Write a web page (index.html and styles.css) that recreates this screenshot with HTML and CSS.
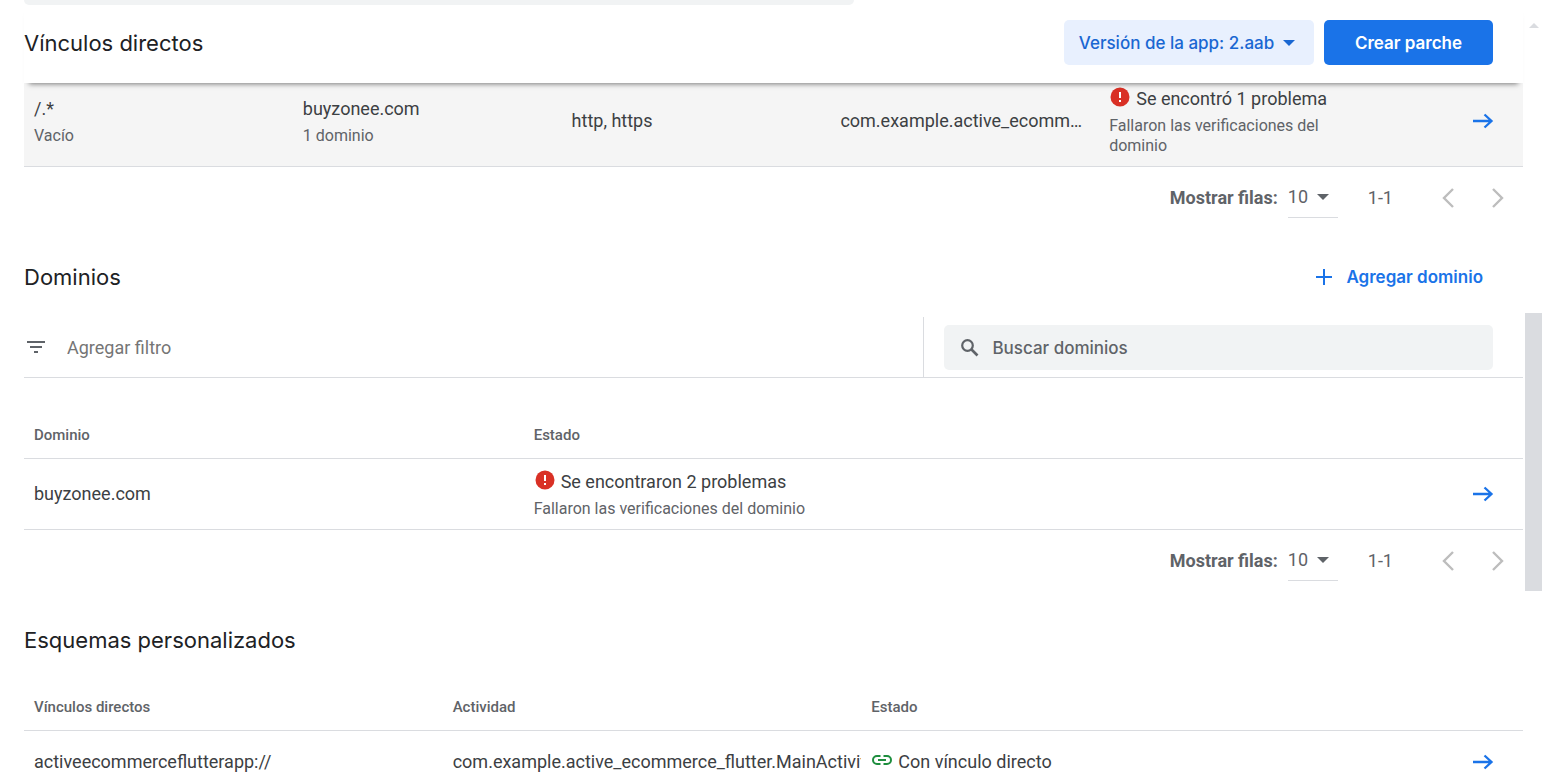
FILE: index.html
```html
<!DOCTYPE html>
<html lang="es">
<head>
<meta charset="utf-8">
<title>Vínculos directos</title>
<link rel="stylesheet" href="styles.css">
</head>
<body>
<svg class="defs" aria-hidden="true">
  <symbol id="arrow" viewBox="0 0 22 18"><path d="M1 9h18M12.500 2.500 19.500 9l-7 6.500" fill="none" stroke="currentColor" stroke-width="2.300"/></symbol>
  <symbol id="error" viewBox="0 0 20 20"><circle cx="10" cy="10" r="9.500" fill="#d93025"/><path d="M9 5h2v6H9zM9 13h2v2H9z" fill="#fff"/></symbol>
  <symbol id="caret" viewBox="0 0 12 6"><path d="M0 0h12L6 6z" fill="currentColor"/></symbol>
  <symbol id="prev" viewBox="0 0 12 20"><path d="M11 1 2 10l9 9" fill="none" stroke="currentColor" stroke-width="2.400"/></symbol>
  <symbol id="next" viewBox="0 0 12 20"><path d="m1 1 9 9-9 9" fill="none" stroke="currentColor" stroke-width="2.400"/></symbol>
</svg>
<div class="app">
  <main class="content">
    <div class="panel-end"></div>
    <header class="topbar">
      <h1 class="title">Vínculos directos</h1>
      <div class="actions">
        <button class="btn btn-tonal" type="button">Versión de la app: 2.aab<svg class="caret"><use href="#caret"/></svg></button>
        <button class="btn btn-primary" type="button">Crear parche</button>
      </div>
    </header>

    <section class="links">
      <table class="table">
        <colgroup><col><col><col><col><col><col class="col-links-go"></colgroup>
        <tbody>
          <tr class="active">
            <td><div class="primary">/.*</div><div class="secondary">Vacío</div></td>
            <td><div class="primary">buyzonee.com</div><div class="secondary">1 dominio</div></td>
            <td><div class="primary single">http, https</div></td>
            <td><div class="primary single ellipsis">com.example.active_ecommerce_flutter.MainActivity</div></td>
            <td><div class="primary status"><svg class="error"><use href="#error"/></svg>Se encontró 1 problema</div><div class="secondary">Fallaron las verificaciones del dominio</div></td>
            <td class="go"><a href="#" aria-label="Ver vínculo"><svg class="arrow"><use href="#arrow"/></svg></a></td>
          </tr>
        </tbody>
      </table>
      <div class="pager">
        <label class="pager-label" for="rows-links">Mostrar filas:</label>
        <span class="pager-select"><select id="rows-links"><option>10</option></select><svg class="caret"><use href="#caret"/></svg></span>
        <span class="pager-range">1-1</span>
        <button class="pager-btn" type="button" aria-label="Anterior"><svg><use href="#prev"/></svg></button>
        <button class="pager-btn" type="button" aria-label="Siguiente"><svg><use href="#next"/></svg></button>
      </div>
    </section>

    <section>
      <div class="section-head">
        <h2 class="title">Dominios</h2>
        <button class="btn btn-text" type="button"><svg class="plus" viewBox="0 0 16 16"><path d="M8 0v16M0 8h16" stroke="currentColor" stroke-width="2"/></svg>Agregar dominio</button>
      </div>
      <div class="toolbar">
        <label class="filter">
          <svg class="filter-icon" viewBox="0 0 18 12"><path d="M0 1h18M3 6h12M7 11h4" stroke="currentColor" stroke-width="2"/></svg>
          <input class="filter-input" type="text" placeholder="Agregar filtro" aria-label="Agregar filtro">
        </label>
        <div class="search-wrap">
          <label class="search">
            <svg class="search-icon" viewBox="0 0 18 18"><circle cx="6.500" cy="6.500" r="5.300" fill="none" stroke="currentColor" stroke-width="2.200"/><path d="m10.500 10.500 6 6" stroke="currentColor" stroke-width="2.600"/></svg>
            <input class="search-input" type="search" placeholder="Buscar dominios" aria-label="Buscar dominios">
          </label>
        </div>
      </div>
      <table class="table">
        <thead><tr><th>Dominio</th><th>Estado</th><th></th></tr></thead>
        <tbody>
          <tr>
            <td><div class="primary single">buyzonee.com</div></td>
            <td><div class="primary status"><svg class="error"><use href="#error"/></svg>Se encontraron 2 problemas</div><div class="secondary">Fallaron las verificaciones del dominio</div></td>
            <td class="go"><a href="#" aria-label="Ver dominio"><svg class="arrow"><use href="#arrow"/></svg></a></td>
          </tr>
        </tbody>
      </table>
      <div class="pager">
        <label class="pager-label" for="rows-domains">Mostrar filas:</label>
        <span class="pager-select"><select id="rows-domains"><option>10</option></select><svg class="caret"><use href="#caret"/></svg></span>
        <span class="pager-range">1-1</span>
        <button class="pager-btn" type="button" aria-label="Anterior"><svg><use href="#prev"/></svg></button>
        <button class="pager-btn" type="button" aria-label="Siguiente"><svg><use href="#next"/></svg></button>
      </div>
    </section>

    <section>
      <div class="section-head">
        <h2 class="title">Esquemas personalizados</h2>
      </div>
      <table class="table schemes">
        <colgroup><col><col><col><col class="col-schemes-go"></colgroup>
        <thead><tr><th>Vínculos directos</th><th>Actividad</th><th>Estado</th><th></th></tr></thead>
        <tbody>
          <tr>
            <td><div class="primary single">activeecommerceflutterapp://</div></td>
            <td class="flush"><div class="primary single clip">com.example.active_ecommerce_flutter.MainActivity</div></td>
            <td><div class="primary single status"><svg class="link-icon" viewBox="0 0 20 10"><path d="M8.500 1H5a4 4 0 0 0 0 8h3.500M11.500 1H15a4 4 0 0 1 0 8h-3.500M6 5h8" fill="none" stroke="#1e8e3e" stroke-width="2"/></svg>Con vínculo directo</div></td>
            <td class="go"><a href="#" aria-label="Ver esquema"><svg class="arrow"><use href="#arrow"/></svg></a></td>
          </tr>
        </tbody>
      </table>
    </section>
  </main>
  <div class="scrollbar" aria-hidden="true">
    <svg class="scroll-up" viewBox="0 0 10 5"><path d="M5 0l5 5H0z" fill="#dadce0"/></svg>
    <div class="scroll-thumb"></div>
  </div>
</div>
</body>
</html>
```

FILE: styles.css
```css
* { box-sizing: border-box; }

body {
  margin: 0;
  background: #fff;
  color: #3c4043;
  font: 18px/26px Roboto, "Liberation Sans", sans-serif;
}

button, input, select { font: inherit; border: 0; margin: 0; padding: 0; background: none; outline: 0; }
button { cursor: pointer; }
svg { display: block; flex: none; }
.defs { position: absolute; width: 0; height: 0; }

.app {
  display: grid;
  grid-template-columns: minmax(0, 1fr) 18px;
  height: 100vh;
  overflow: hidden;
}

.content { padding: 0 2px 0 24px; }

.panel-end {
  width: 830px;
  max-width: 100%;
  height: 5px;
  background: #f1f3f4;
  border-radius: 0 0 8px 8px;
}

.topbar {
  position: relative;
  z-index: 1;
  display: flex;
  align-items: center;
  justify-content: space-between;
  height: 78px;
  padding: 0 30px 3px 0;
  background: #fff;
  box-shadow: 0 6px 5px -5px rgba(0, 0, 0, .5);
}

.title {
  margin: 0;
  color: #202124;
  font: 400 22px/28px "Google Sans", Inter, sans-serif;
}

.actions { display: flex; gap: 10px; }

.btn {
  display: flex;
  align-items: center;
  justify-content: center;
  height: 45px;
  border-radius: 5px;
  font: 600 17px/24px "Google Sans", Inter, sans-serif;
  white-space: nowrap;
}
.btn-tonal { width: 250px; gap: 9px; padding: 0 19px 0 15px; background: #e8f0fe; color: #1967d2; font-weight: 500; }
.btn-primary { width: 169px; background: #1a73e8; color: #fff; }
.btn-text { gap: 14px; padding: 0 10px; color: #1a73e8; }
.plus { width: 16px; height: 16px; }
.caret { width: 12px; height: 6px; }

.links { margin-top: -7px; }

.table { width: 100%; border-collapse: separate; border-spacing: 0; table-layout: fixed; }
.col-links-go { width: 155px; }
.col-schemes-go { width: 243px; }
.table th {
  height: 48px;
  padding: 0 10px;
  border-bottom: 1px solid #dadce0;
  color: #5f6368;
  font-size: 15px;
  font-weight: 500;
  line-height: 20px;
  text-align: left;
}
.table td { padding: 10px; border-bottom: 1px solid #dadce0; vertical-align: middle; }
.active td { background: #f5f5f5; }
.schemes { margin-top: 11px; }
.schemes td { height: 62px; }
.table .flush { padding-right: 0; }

.primary { margin-bottom: 4px; white-space: nowrap; }
.single { margin-bottom: 0; }
.secondary { color: #5f6368; font-size: 16px; line-height: 20px; }
.ellipsis { overflow: hidden; text-overflow: ellipsis; }
.clip { overflow: hidden; }
.status { display: flex; align-items: center; gap: 6px; padding-left: 1px; }
.error { width: 20px; height: 20px; margin-bottom: 4px; }
.link-icon { width: 20px; height: 10px; margin-bottom: 4px; }
.table .go { padding-right: 29px; }
.go a { display: flex; justify-content: flex-end; color: #1a73e8; }
.arrow { width: 22px; height: 18px; }

.pager {
  display: flex;
  align-items: center;
  justify-content: flex-end;
  height: 62px;
  color: #5f6368;
}
.pager-label { margin-right: 10px; font-weight: 700; }
.pager-select { position: relative; width: 50px; height: 40px; border-bottom: 1px solid #dadce0; }
.pager-select select { width: 100%; height: 38px; appearance: none; color: inherit; }
.pager-select .caret { position: absolute; right: 9px; top: 16px; pointer-events: none; }
.pager-range { margin: 0 30px; }
.pager-btn { display: flex; align-items: center; justify-content: center; width: 50px; height: 50px; color: #bdbdbd; }
.pager-btn svg { width: 12px; height: 20px; }

.section-head {
  display: flex;
  align-items: center;
  justify-content: space-between;
  height: 64px;
  margin: 16px 0 8px;
  padding-right: 30px;
}

.toolbar {
  display: grid;
  grid-template-columns: 3fr 2fr;
  height: 61px;
  margin-bottom: 33px;
  border-bottom: 1px solid #dadce0;
}
.filter { display: flex; align-items: center; gap: 22px; padding-left: 3px; color: #5f6368; }
.filter-icon { width: 18px; height: 12px; }
.filter-input { flex: 1; min-width: 0; height: 40px; color: #3c4043; }
.filter-input::placeholder { color: #757575; }
.search-wrap { padding: 8px 30px 7px 20px; border-left: 1px solid #dadce0; }
.search {
  display: flex;
  align-items: center;
  gap: 13px;
  height: 45px;
  padding: 0 17px;
  border-radius: 5px;
  background: #f1f3f4;
  color: #5f6368;
}
.search-icon { width: 18px; height: 18px; }
.search-input { flex: 1; min-width: 0; height: 40px; font: 500 17px/24px "Google Sans", Inter, sans-serif; }
.search-input::placeholder { color: #5f6368; }

.scrollbar { display: flex; flex-direction: column; align-items: flex-start; padding-top: 23px; }
.scroll-up { width: 10px; height: 5px; margin-left: 4px; }
.scroll-thumb { width: 17px; height: 36vh; margin-top: 285px; background: #dadce0; }
```
